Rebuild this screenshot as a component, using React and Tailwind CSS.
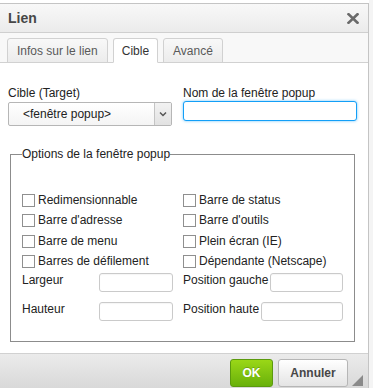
import React from "react";

function Check({ label }) {
  return (
    <div className="flex h-[20px] items-center">
      <span className="block h-[13px] w-[13px] border border-[#8f8f8f] bg-white" />
      <span className="ml-[3px] leading-[16px]">{label}</span>
    </div>
  );
}

function Field({ w, cls = "" }) {
  return (
    <div
      className={`h-[19px] rounded-[3px] border border-[#cacaca] bg-white shadow-[inset_0_1px_1px_rgba(0,0,0,0.04)] ${w} ${cls}`}
    />
  );
}

export default function App() {
  return (
    <div
      className="flex h-[388px] w-[373px] overflow-hidden bg-[#f4f4f4] text-[12px] text-[#222]"
      style={{ fontFamily: '"Liberation Sans", Arial, sans-serif' }}
    >
      <div className="flex w-[369px] shrink-0 flex-col bg-white pt-[3px]">
        <div className="flex h-[420px] flex-col border-r border-t border-[#c4c4c4]">
          {/* Title bar */}
          <div className="flex h-[29px] shrink-0 items-center justify-between border-b border-[#cfcfcf] bg-gradient-to-b from-[#f8f8f8] to-[#ebebeb] pl-2 pr-[9px]">
            <span className="text-[14px] font-bold text-[#474747]">Lien</span>
            <svg width="12" height="11" viewBox="0 0 12 11" className="mt-[1px]">
              <path d="M1.5 1.2 L10.5 9.8 M10.5 1.2 L1.5 9.8" stroke="#6a6a6a" strokeWidth="2.6" strokeLinecap="square" />
            </svg>
          </div>
          {/* Tabs */}
          <div className="flex h-[30px] shrink-0 items-end gap-[5px] border-b border-[#d1d1d1] bg-[#f8f8f8] pl-[7px]">
            <div className="-mb-px flex h-[25px] items-center rounded-t-[3px] border border-[#d1d1d1] bg-gradient-to-b from-[#f8f8f8] to-[#ececec] px-[9px] text-[#595959]">
              Infos sur le lien
            </div>
            <div className="-mb-px flex h-[25px] items-center rounded-t-[3px] border border-b-white border-[#d1d1d1] bg-white px-[8px] text-[#333]">
              Cible
            </div>
            <div className="-mb-px flex h-[25px] items-center rounded-t-[3px] border border-[#d1d1d1] bg-gradient-to-b from-[#f8f8f8] to-[#ececec] px-[9px] text-[#595959]">
              Avancé
            </div>
          </div>
          {/* Content */}
          <div className="flex h-[290px] shrink-0 flex-col bg-white px-2 pt-[22px]">
            <div className="flex">
              <div className="flex w-[175px] flex-col">
                <span className="leading-[16px]">Cible (Target)</span>
                <div className="mt-[1px] flex h-[24px] w-[164px] overflow-hidden rounded-[2px] border border-[#b6b6b6] bg-gradient-to-b from-white to-[#f4f4f4]">
                  <span className="flex flex-1 items-center pl-[14px] text-[#222]">&lt;fenêtre popup&gt;</span>
                  <span className="flex w-[17px] items-center justify-center border-l border-[#c4c4c4] bg-gradient-to-b from-[#f2f2f2] to-[#e2e2e2]">
                    <svg width="8" height="6" viewBox="0 0 8 6">
                      <path d="M1 1.5 L4 4.5 L7 1.5" stroke="#555" strokeWidth="1.5" fill="none" />
                    </svg>
                  </span>
                </div>
              </div>
              <div className="flex flex-col">
                <span className="leading-[16px]">Nom de la fenêtre popup</span>
                <div className="h-[20px] w-[174px] rounded-[3px] border border-[#139ff7] bg-white shadow-[0_0_3px_rgba(19,159,247,0.6)]" />
              </div>
            </div>
            <fieldset className="ml-[2px] mt-[20px] h-[196px] w-[345px] border border-[#8c8c8c] px-[11px]">
              <legend className="px-0 leading-[16px]">Options de la fenêtre popup</legend>
              <div className="mt-[28px] grid grid-cols-[161px_160px]">
                <Check label="Redimensionnable" />
                <Check label="Barre de status" />
                <Check label="Barre d'adresse" />
                <Check label="Barre d'outils" />
                <div className="mt-[1px]"><Check label="Barre de menu" /></div>
                <div className="mt-[1px]"><Check label="Plein écran (IE)" /></div>
                <Check label="Barres de défilement" />
                <Check label="Dépendante (Netscape)" />
                <div className="mt-[1px] flex h-[29px] items-start">
                  <span className="w-[77px] leading-[16px]">Largeur</span>
                  <Field w="w-[74px]" cls="mt-[1px]" />
                </div>
                <div className="mt-[1px] flex h-[29px] items-start">
                  <span className="leading-[16px]">Position gauche</span>
                  <Field w="flex-1" cls="ml-[2px] mt-[1px]" />
                </div>
                <div className="flex items-start">
                  <span className="w-[77px] leading-[16px]">Hauteur</span>
                  <Field w="w-[74px]" cls="mt-[1px]" />
                </div>
                <div className="flex items-start">
                  <span className="leading-[16px]">Position haute</span>
                  <Field w="flex-1" cls="ml-[2px] mt-[1px]" />
                </div>
              </div>
            </fieldset>
          </div>
          {/* Footer */}
          <div className="relative flex h-[40px] shrink-0 items-start justify-end gap-[5px] border-t border-[#d1d1d1] bg-gradient-to-b from-[#ebebeb] to-[#d6d6d6] pr-[20px] pt-[5px]">
            <div className="flex h-[28px] w-[43px] items-center justify-center rounded-[3px] border border-[#5b9a0e] bg-gradient-to-b from-[#9ad717] to-[#69b10b] text-[12px] font-bold text-white [text-shadow:0_-1px_0_rgba(0,0,0,0.2)]">
              OK
            </div>
            <div className="flex h-[28px] w-[70px] items-center justify-center rounded-[3px] border border-[#b6b6b6] bg-gradient-to-b from-white to-[#e4e4e4] text-[12px] font-bold text-[#474747]">
              Annuler
            </div>
            <svg width="12" height="12" viewBox="0 0 12 12" className="absolute left-[352px] top-[21px]">
              <polygon points="11,0 11,11 0,11" fill="#8a8a8a" />
            </svg>
          </div>
        </div>
      </div>
    </div>
  );
}
